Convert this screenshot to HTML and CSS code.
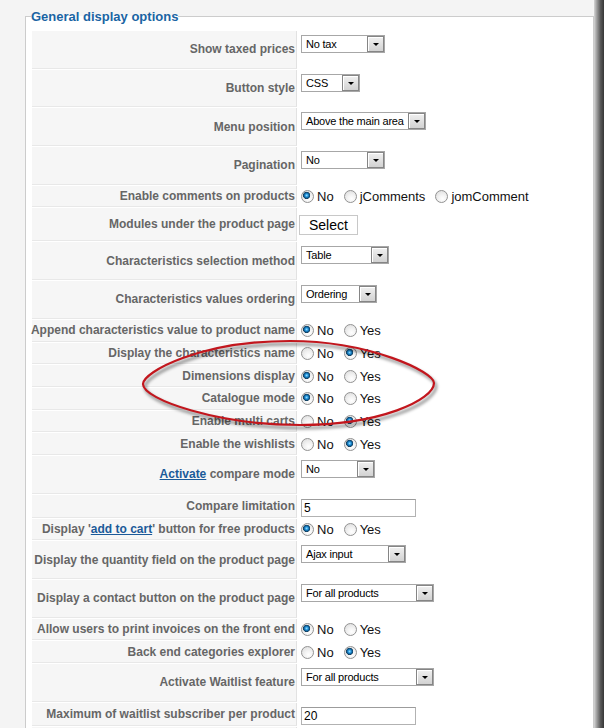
FILE: index.html
```html
<!DOCTYPE html>
<html lang="en">
<head>
<meta charset="utf-8">
<title>General display options</title>
<link rel="stylesheet" href="styles.css">
</head>
<body>
<div class="page">
  <fieldset class="box">
    <legend class="box-title">General display options</legend>
    <div class="opts">
      <div class="row s"><div class="lbl">Show taxed prices</div><div class="val"><span class="sel w84"><span class="txt">No tax</span><span class="arr"></span></span></div></div>
      <div class="row s"><div class="lbl">Button style</div><div class="val"><span class="sel w59"><span class="txt">CSS</span><span class="arr"></span></span></div></div>
      <div class="row s"><div class="lbl">Menu position</div><div class="val"><span class="sel w125"><span class="txt">Above the main area</span><span class="arr"></span></span></div></div>
      <div class="row s"><div class="lbl">Pagination</div><div class="val"><span class="sel w84"><span class="txt">No</span><span class="arr"></span></span></div></div>
      <div class="row r"><div class="lbl">Enable comments on products</div><div class="val"><label class="opt"><input type="radio" class="rd" name="c1" checked>No</label><label class="opt"><input type="radio" class="rd" name="c1">jComments</label><label class="opt"><input type="radio" class="rd" name="c1">jomComment</label></div></div>
      <div class="row b"><div class="lbl">Modules under the product page</div><div class="val"><button class="btn" type="button">Select</button></div></div>
      <div class="row s"><div class="lbl">Characteristics selection method</div><div class="val"><span class="sel w88"><span class="txt">Table</span><span class="arr"></span></span></div></div>
      <div class="row s"><div class="lbl">Characteristics values ordering</div><div class="val"><span class="sel w76"><span class="txt">Ordering</span><span class="arr"></span></span></div></div>
      <div class="row r"><div class="lbl">Append characteristics value to product name</div><div class="val"><label class="opt"><input type="radio" class="rd" name="c2" checked>No</label><label class="opt"><input type="radio" class="rd" name="c2">Yes</label></div></div>
      <div class="row r"><div class="lbl">Display the characteristics name</div><div class="val"><label class="opt"><input type="radio" class="rd" name="c3">No</label><label class="opt"><input type="radio" class="rd" name="c3" checked>Yes</label></div></div>
      <div class="row r"><div class="lbl">Dimensions display</div><div class="val"><label class="opt"><input type="radio" class="rd" name="c4" checked>No</label><label class="opt"><input type="radio" class="rd" name="c4">Yes</label></div></div>
      <div class="row r"><div class="lbl">Catalogue mode</div><div class="val"><label class="opt"><input type="radio" class="rd" name="c5" checked>No</label><label class="opt"><input type="radio" class="rd" name="c5">Yes</label></div></div>
      <div class="row r"><div class="lbl">Enable multi carts</div><div class="val"><label class="opt"><input type="radio" class="rd" name="c6">No</label><label class="opt"><input type="radio" class="rd" name="c6" checked>Yes</label></div></div>
      <div class="row r"><div class="lbl">Enable the wishlists</div><div class="val"><label class="opt"><input type="radio" class="rd" name="c7">No</label><label class="opt"><input type="radio" class="rd" name="c7" checked>Yes</label></div></div>
      <div class="row s"><div class="lbl"><span><a class="lnk" href="#">Activate</a> compare mode</span></div><div class="val"><span class="sel w74"><span class="txt">No</span><span class="arr"></span></span></div></div>
      <div class="row i"><div class="lbl">Compare limitation</div><div class="val"><input class="inp" type="text" value="5"></div></div>
      <div class="row r"><div class="lbl"><span>Display '<a class="lnk" href="#">add to cart</a>' button for free products</span></div><div class="val"><label class="opt"><input type="radio" class="rd" name="c8" checked>No</label><label class="opt"><input type="radio" class="rd" name="c8">Yes</label></div></div>
      <div class="row s"><div class="lbl">Display the quantity field on the product page</div><div class="val"><span class="sel w105"><span class="txt">Ajax input</span><span class="arr"></span></span></div></div>
      <div class="row s"><div class="lbl">Display a contact button on the product page</div><div class="val"><span class="sel w133"><span class="txt">For all products</span><span class="arr"></span></span></div></div>
      <div class="row r"><div class="lbl">Allow users to print invoices on the front end</div><div class="val"><label class="opt"><input type="radio" class="rd" name="c9" checked>No</label><label class="opt"><input type="radio" class="rd" name="c9">Yes</label></div></div>
      <div class="row r"><div class="lbl">Back end categories explorer</div><div class="val"><label class="opt"><input type="radio" class="rd" name="c10">No</label><label class="opt"><input type="radio" class="rd" name="c10" checked>Yes</label></div></div>
      <div class="row s"><div class="lbl">Activate Waitlist feature</div><div class="val"><span class="sel w133"><span class="txt">For all products</span><span class="arr"></span></span></div></div>
      <div class="row i"><div class="lbl">Maximum of waitlist subscriber per product</div><div class="val"><input class="inp" type="text" value="20"></div></div>
      <div class="row s"><div class="lbl"></div><div class="val"></div></div>
    </div>
  </fieldset>
</div>
<div class="edge"></div>
<svg class="mark" width="604" height="728" viewBox="0 0 604 728" aria-hidden="true">
  <defs>
    <filter id="soft" x="-10%" y="-40%" width="120%" height="180%">
      <feGaussianBlur stdDeviation="1.8"/>
    </filter>
  </defs>
  <path d="M143,384 C143,372 200,341 290,341 C370,341 434,372 434,383 C434,400 380,425 300,425 C220,425 143,400 143,384 Z" transform="translate(2,3)" fill="none" stroke="#000" stroke-opacity="0.38" stroke-width="3" filter="url(#soft)"/>
  <path d="M143,384 C143,372 200,341 290,341 C370,341 434,372 434,383 C434,400 380,425 300,425 C220,425 143,400 143,384 Z" fill="none" stroke="#c2161d" stroke-width="2.2"/>
</svg>
</body>
</html>
```

FILE: styles.css
```css
html, body {
  margin: 0;
  height: 728px;
  overflow: hidden;
}

body {
  position: relative;
  display: flex;
  background: #f4f4f4;
  font-family: "Liberation Sans", Arial, sans-serif;
}

.page {
  flex: 1;
  padding: 9px 0 0 25px;
}

.edge {
  width: 10px;
  background: linear-gradient(90deg, #d6d6d6 0%, #9a9a9a 30%, #5a5a5a 65%, #363636 100%);
}

.box {
  margin: 0;
  padding: 7px 6px 0 6px;
  border: 1px solid #cccccc;
  background: #ffffff;
  min-height: 760px;
}

.box-title {
  font-weight: bold;
  font-size: 13px;
  line-height: 15px;
  color: #1a64a3;
  padding: 0;
  margin-left: -1px;
}

.opts {
  display: flex;
  flex-direction: column;
  gap: 1px;
}

.row {
  display: grid;
  grid-template-columns: 265px 1fr;
}

.row.s { height: 37.7px; }
.row.r { height: 21.7px; }
.row.b { height: 33px; }
.row.i { height: 23px; }

.lbl {
  box-sizing: border-box;
  background: #f6f6f6;
  border-right: 1px solid #e2e2e2;
  border-bottom: 1px solid #e8e8e8;
  display: flex;
  align-items: center;
  justify-content: flex-end;
  padding-right: 1px;
  font-size: 12px;
  font-weight: bold;
  color: #666666;
  white-space: nowrap;
}

.lnk {
  color: #1b5a99;
  text-decoration: underline;
}

.val {
  padding-left: 4px;
  display: flex;
  align-items: center;
}

.row.s .val {
  align-items: flex-start;
  padding-top: 4px;
}

.row.i .val {
  padding-top: 3px;
}

/* dropdowns */
.sel {
  box-sizing: border-box;
  display: flex;
  height: 18px;
  border: 1px solid #a7a7a7;
  background: #ffffff;
  font-size: 11px;
  letter-spacing: -0.2px;
  color: #000000;
}

.sel .txt {
  flex: 1;
  padding-left: 4px;
  line-height: 16px;
  white-space: nowrap;
  overflow: hidden;
}

.sel .arr {
  box-sizing: border-box;
  width: 17px;
  height: 16px;
  border: 1px solid #858585;
  background: linear-gradient(#f0f0f0, #d2d2d2);
  box-shadow: inset 1px 1px 0 #ffffff;
  display: flex;
  align-items: center;
  justify-content: center;
}

.sel .arr::after {
  content: "";
  width: 0;
  height: 0;
  border-left: 3px solid transparent;
  border-right: 3px solid transparent;
  border-top: 3px solid #000000;
  margin-top: 1px;
}

.w59 { width: 59px; }
.w74 { width: 74px; }
.w76 { width: 76px; }
.w84 { width: 84px; }
.w88 { width: 88px; }
.w105 { width: 105px; }
.w125 { width: 125px; }
.w133 { width: 133px; }

/* radios */
.opt {
  display: flex;
  align-items: center;
  font-size: 13px;
  color: #111111;
  margin-right: 10px;
}

.rd {
  appearance: none;
  -webkit-appearance: none;
  box-sizing: border-box;
  width: 13px;
  height: 13px;
  margin: 0 3px 0 0;
  border-radius: 50%;
  border: 1px solid #929292;
  background: radial-gradient(circle at 60% 70%, #ffffff 0, #f2f2f2 40%, #d8d8d8 100%);
}

.rd:checked {
  background:
    radial-gradient(circle at 42% 40%, #9fe2ff 0, #2a9ae0 1.4px, #0b5d96 2.6px, #17405e 3.3px, rgba(23, 64, 94, 0) 3.9px),
    radial-gradient(circle at 60% 70%, #ffffff 0, #f2f2f2 40%, #d8d8d8 100%);
}

/* button */
.btn {
  box-sizing: border-box;
  height: 20px;
  margin: 0 0 0 -2px;
  padding: 0 9px;
  border: 1px solid #c8c8c8;
  border-radius: 0;
  background: #ffffff;
  font-family: "Liberation Sans", Arial, sans-serif;
  font-size: 14px;
  color: #000000;
}

/* text inputs */
.inp {
  box-sizing: border-box;
  width: 115px;
  height: 18px;
  margin: 0;
  padding: 0 2px;
  border: 1px solid #b2b2b2;
  border-top-color: #9c9c9c;
  border-radius: 0;
  background: #ffffff;
  font-family: "Liberation Sans", Arial, sans-serif;
  font-size: 12px;
  color: #000000;
}

/* annotation overlay */
.mark {
  position: absolute;
  left: 0;
  top: 0;
  pointer-events: none;
}
```
